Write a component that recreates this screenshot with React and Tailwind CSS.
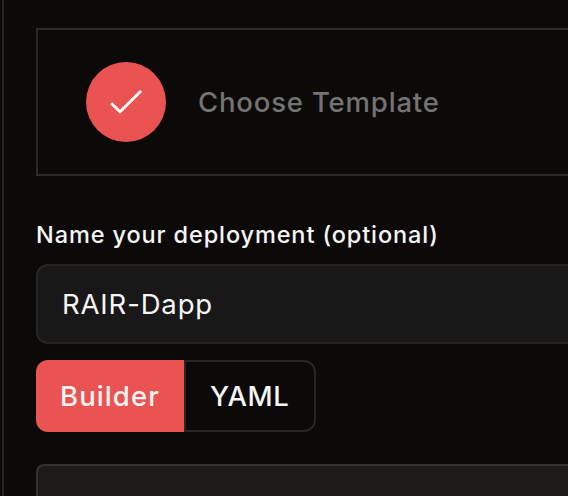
function CheckIcon() {
  return (
    <svg className="size-10" viewBox="0 0 40 40" fill="none" stroke="#fff" strokeWidth="2.8">
      <path d="M5.2 21.2 L14 29.8 L35 9" />
    </svg>
  );
}

export default function App() {
  return (
    <div className="flex h-[496px] w-[568px] overflow-hidden bg-[#0c0a09] pl-0.5 font-['Inter',sans-serif] text-[#f5f5f4]">
      <main className="flex h-full w-[566px] shrink-0 flex-col border-l-2 border-[#262626] pt-7 pl-8">
        <section className="flex h-37 shrink-0 items-center gap-8 border-2 border-r-0 border-[#2a2a2a] pl-12">
          <div className="flex size-20 items-center justify-center rounded-full bg-[#eb5352]">
            <CheckIcon />
          </div>
          <h2 className="text-[27.5px] leading-9 font-medium tracking-[0.82px] whitespace-nowrap text-[#737373]">
            Choose Template
          </h2>
        </section>
        <label className="mt-[43px] text-[23.5px] leading-8 font-medium tracking-[0.88px] whitespace-nowrap">
          Name your deployment (optional)
        </label>
        <div className="mt-[13px] flex h-20 shrink-0 items-center rounded-l-xl border-2 border-r-0 border-[#262626] bg-[#181818] pt-0.5 pl-6 text-[27.5px] tracking-[0.85px]">
          RAIR-Dapp
        </div>
        <div className="mt-4 flex h-18 shrink-0 text-[27.5px] font-medium">
          <button className="flex w-37 items-center rounded-l-xl bg-[#eb5352] pt-0.5 pl-6 tracking-[1.1px]">Builder</button>
          <button className="flex w-33 items-center rounded-r-xl border-2 border-l-2 border-[#262626] pt-0.5 pl-6 tracking-[0.5px]">YAML</button>
        </div>
        <div className="mt-8 h-20 shrink-0 rounded-tl-lg border-t-2 border-l-2 border-[#333332] bg-[#1c1b19]" />
      </main>
    </div>
  );
}
